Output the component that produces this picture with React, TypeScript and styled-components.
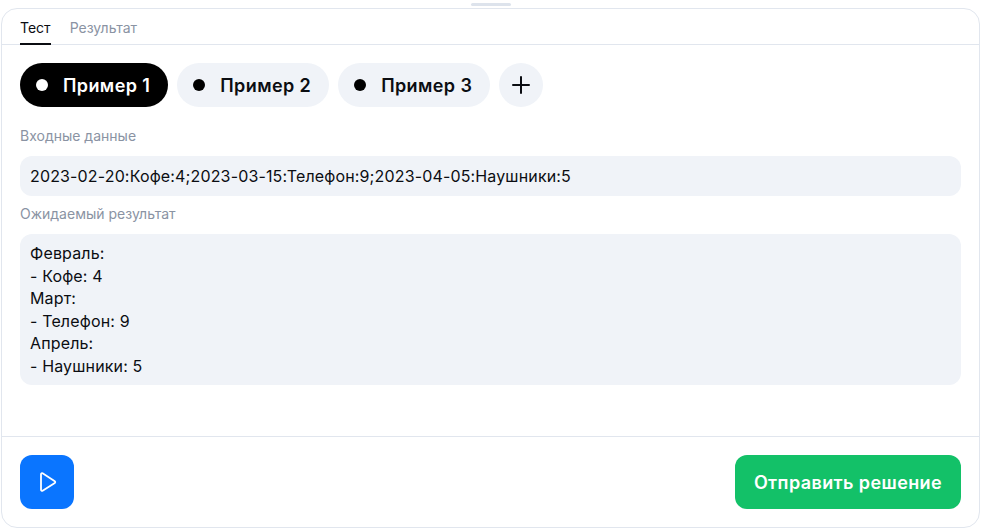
import React, { useState } from 'react'
import styled, { createGlobalStyle } from 'styled-components'

const GlobalStyle = createGlobalStyle`
  body {
    margin: 0;
    background: #ffffff;
    font-family: Inter, "Noto Sans", sans-serif;
    color: #0b0d12;
  }
`

const Page = styled.div`
  padding: 3px 0 0 1px;
  width: 979px;
  display: flex;
  flex-direction: column;
  align-items: center;
`

const Handle = styled.div`
  width: 40px;
  height: 3px;
  border-radius: 2px;
  background: #dde3ec;
  margin-bottom: 2px;
`

const Panel = styled.div`
  box-sizing: border-box;
  width: 979px;
  height: 520px;
  border: 1px solid #e1e6ee;
  border-radius: 16px;
  display: flex;
  flex-direction: column;
  overflow: hidden;
`

const TabBar = styled.div`
  height: 35px;
  display: flex;
  align-items: stretch;
  gap: 19px;
  padding: 0 18px;
  border-bottom: 1px solid #e1e6ee;
`

const Tab = styled.button<{ $active?: boolean }>`
  background: none;
  border: none;
  padding: 0;
  font: 400 14px Inter, sans-serif;
  color: ${p => (p.$active ? '#0b0d12' : '#8a93a3')};
  border-bottom: 2px solid ${p => (p.$active ? '#0b0d12' : 'transparent')};
  margin-bottom: -1px;
  padding-top: 2px;
  cursor: pointer;
`

const Content = styled.div`
  flex: 1;
  padding: 18px 18px 0;
  display: flex;
  flex-direction: column;
`

const PillRow = styled.div`
  display: flex;
  gap: 9px;
  margin-bottom: 19px;
`

const Pill = styled.button<{ $active?: boolean }>`
  height: 44px;
  border: none;
  border-radius: 22px;
  padding: 0 18px 0 16px;
  display: flex;
  align-items: center;
  gap: 15px;
  font: 600 18px Inter, sans-serif;
  letter-spacing: 0.4px;
  background: ${p => (p.$active ? '#000000' : '#f0f3f8')};
  color: ${p => (p.$active ? '#ffffff' : '#0b0d12')};
  cursor: pointer;
`

const Dot = styled.span<{ $active?: boolean }>`
  width: 12px;
  height: 12px;
  border-radius: 50%;
  background: ${p => (p.$active ? '#ffffff' : '#000000')};
`

const AddButton = styled.button`
  width: 44px;
  height: 44px;
  border: none;
  border-radius: 50%;
  background: #f0f3f8;
  display: flex;
  align-items: center;
  justify-content: center;
  padding: 0;
  cursor: pointer;
`

const Label = styled.div<{ $top?: number }>`
  font-size: 14px;
  line-height: 20px;
  color: #8a93a3;
  margin-top: ${p => p.$top ?? 0}px;
  margin-bottom: 10px;
`

const Field = styled.div`
  background: #f0f3f8;
  border-radius: 12px;
  padding: 8px 10px;
  font-size: 16px;
  line-height: 22.5px;
  letter-spacing: 0.15px;
  white-space: pre-line;
`

const InputField = styled(Field)`
  height: 40px;
  box-sizing: border-box;
  display: flex;
  align-items: center;
`

const Footer = styled.div`
  border-top: 1px solid #e1e6ee;
  padding: 18px;
  display: flex;
  justify-content: space-between;
  align-items: center;
`

const RunButton = styled.button`
  width: 54px;
  height: 54px;
  border: none;
  border-radius: 12px;
  background: #0a75ff;
  display: flex;
  align-items: center;
  justify-content: center;
  cursor: pointer;
`

const SubmitButton = styled.button`
  width: 226px;
  height: 54px;
  border: none;
  border-radius: 12px;
  background: #13c168;
  color: #ffffff;
  font: 600 18px Inter, sans-serif;
  letter-spacing: 0.4px;
  cursor: pointer;
`

const examples = ['Пример 1', 'Пример 2', 'Пример 3']

const expected = `Февраль:
- Кофе: 4
Март:
- Телефон: 9
Апрель:
- Наушники: 5`

export default function App() {
  const [active, setActive] = useState(0)
  return (
    <>
      <GlobalStyle />
      <Page>
        <Handle />
        <Panel>
          <TabBar>
            <Tab $active>Тест</Tab>
            <Tab>Результат</Tab>
          </TabBar>
          <Content>
            <PillRow>
              {examples.map((name, i) => (
                <Pill key={name} $active={i === active} onClick={() => setActive(i)}>
                  <Dot $active={i === active} />
                  {name}
                </Pill>
              ))}
              <AddButton aria-label="Добавить">
                <svg width="20" height="20" viewBox="0 0 20 20" fill="none">
                  <path d="M10 2v16M2 10h16" stroke="#0b0d12" strokeWidth="2" strokeLinecap="round" />
                </svg>
              </AddButton>
            </PillRow>
            <Label>Входные данные</Label>
            <InputField>2023-02-20:Кофе:4;2023-03-15:Телефон:9;2023-04-05:Наушники:5</InputField>
            <Label $top={8}>Ожидаемый результат</Label>
            <Field>{expected}</Field>
          </Content>
          <Footer>
            <RunButton aria-label="Запустить">
              <svg width="22" height="22" viewBox="0 0 22 22" fill="none">
                <path d="M5 3.2v15.6c0 .8.9 1.3 1.6.9l12.2-7.8c.6-.4.6-1.3 0-1.7L6.6 2.3C5.9 1.9 5 2.4 5 3.2z" stroke="#ffffff" strokeWidth="1.8" strokeLinejoin="round" />
              </svg>
            </RunButton>
            <SubmitButton>Отправить решение</SubmitButton>
          </Footer>
        </Panel>
      </Page>
    </>
  )
}
